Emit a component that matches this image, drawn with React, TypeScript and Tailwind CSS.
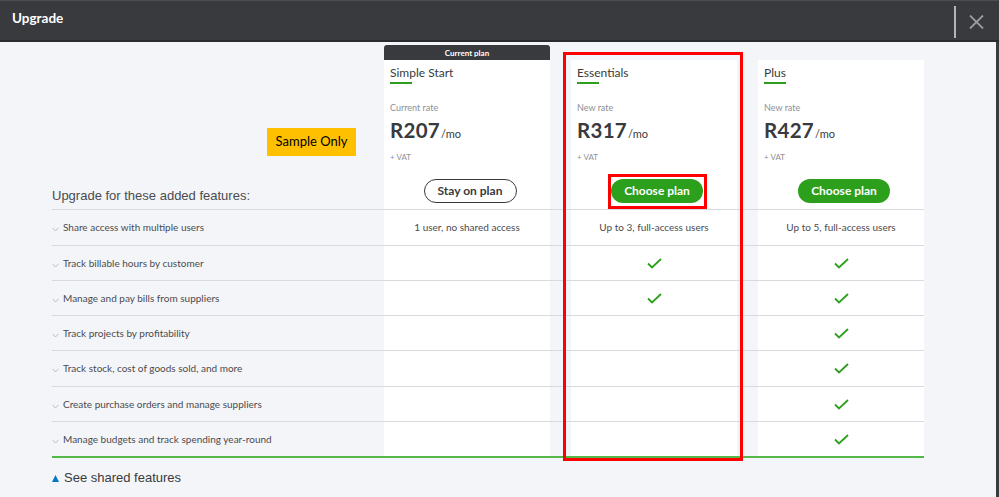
import React from "react";

const plans = [
  { name: "Simple Start", rateLabel: "Current rate", price: "R207", current: true },
  { name: "Essentials", rateLabel: "New rate", price: "R317", current: false },
  { name: "Plus", rateLabel: "New rate", price: "R427", current: false },
];

type Cell = string | boolean;

// row heights include the bottom border (border-box)
const features: { label: string; h: string; cells: Cell[] }[] = [
  { label: "Share access with multiple users", h: "h-[36px]", cells: ["1 user, no shared access", "Up to 3, full-access users", "Up to 5, full-access users"] },
  { label: "Track billable hours by customer", h: "h-[35px]", cells: [false, true, true] },
  { label: "Manage and pay bills from suppliers", h: "h-[35px]", cells: [false, true, true] },
  { label: "Track projects by profitability", h: "h-[35px]", cells: [false, false, true] },
  { label: "Track stock, cost of goods sold, and more", h: "h-[36px]", cells: [false, false, true] },
  { label: "Create purchase orders and manage suppliers", h: "h-[35px]", cells: [false, false, true] },
  { label: "Manage budgets and track spending year-round", h: "h-[36px]", cells: [false, false, true] },
];

function Check() {
  return (
    <svg width="15" height="11" viewBox="0 0 15 11" fill="none">
      <path d="M1 5.5 L5 9.5 L14 1" stroke="#2ca01c" strokeWidth="1.8" />
    </svg>
  );
}

function Chevron() {
  return (
    <svg width="7" height="5" viewBox="0 0 7 5" fill="none" className="mt-[4px]">
      <path d="M0.5 0.8 L3.5 4 L6.5 0.8" stroke="#b5b7bc" strokeWidth="0.9" />
    </svg>
  );
}

function PlanCard({ plan }: { plan: (typeof plans)[number] }) {
  return (
    <div className="w-[166px] flex flex-col pt-[3px]">
      {plan.current ? (
        <div className="h-[15px] bg-[#393a3d] rounded-t-[3px] flex items-center justify-center text-white text-[8px] font-bold leading-none">
          Current plan
        </div>
      ) : (
        <div className="h-[15px]" />
      )}
      <div className="flex-1 bg-white pl-[6px] flex flex-col">
        <div className="pt-[5px] text-[12px] leading-[16px] text-[#393a3d]">{plan.name}</div>
        <div className="mt-[1px] h-[2px] w-[22px] bg-[#2ca01c]" />
        <div className="mt-[18px] text-[9px] leading-[12px] text-[#8d9096]">{plan.rateLabel}</div>
        <div className="mt-[4px] h-[24px] flex items-baseline text-[#393a3d]">
          <span className="text-[20.5px] leading-[24px] font-bold tracking-[0.3px]">{plan.price}</span>
          <span className="text-[11px] ml-[1px]">/mo</span>
        </div>
        <div className="mt-[10px] text-[8px] leading-[10px] text-[#8d9096]">+ VAT</div>
        <div className="mt-[17px] flex justify-center">
          {plan.current ? (
            <button className="w-[93px] h-[24px] rounded-full border border-[#393a3d] bg-white text-[12px] font-bold text-[#393a3d]">
              Stay on plan
            </button>
          ) : (
            <button className="w-[92px] h-[24px] rounded-full bg-[#2ca01c] text-[12px] font-bold text-white">
              Choose plan
            </button>
          )}
        </div>
      </div>
    </div>
  );
}

export default function App() {
  return (
    <div className="w-[999px] h-[497px] overflow-hidden bg-[#f4f5f8] font-['Lato',sans-serif]">
      <div className="h-[42px] bg-[#393a3d] border-t border-t-[#4d4e52] border-b-2 border-b-[#2a2b2e] flex items-start">
        <div className="pl-[12px] pt-[9px] text-white text-[13.5px] font-bold leading-[16px]">Upgrade</div>
        <div className="ml-auto flex items-start">
          <div className="mt-[5px] w-[2px] h-[32px] bg-[#b4b5b8]" />
          <div className="ml-[13px] mt-[14px] mr-[15px]">
            <svg width="15" height="14" viewBox="0 0 15 14" fill="none">
              <path d="M1 0.5 L14 13.5 M14 0.5 L1 13.5" stroke="#9c9da1" strokeWidth="1.8" />
            </svg>
          </div>
        </div>
      </div>

      <div className="relative h-[455px] border-r-[3px] border-r-[#3a3b3e] pl-[52px]">
        <div className="flex h-[167px]">
          <div className="w-[332px] flex flex-col">
            <div className="mt-[86px] ml-[215px] w-[89px] h-[28px] bg-[#ffc000] flex items-center justify-center text-[13px] text-black">
              Sample Only
            </div>
            <div className="mt-auto mb-[5px] font-['Liberation_Sans',sans-serif] text-[13px] leading-[16px] text-[#4a4b4f]">
              Upgrade for these added features:
            </div>
          </div>
          <PlanCard plan={plans[0]} />
          <div className="w-[21px]" />
          <PlanCard plan={plans[1]} />
          <div className="w-[21px]" />
          <PlanCard plan={plans[2]} />
        </div>

        <div className="w-[872px] border-t border-[#d8dadf]">
          {features.map((f, i) => (
            <div
              key={f.label}
              className={
                "flex " +
                f.h +
                (i === features.length - 1 ? " border-b-2 border-[#53b848]" : " border-b border-[#d8dadf]")
              }
            >
              <div className="w-[332px] flex items-center gap-[4px] text-[10px] text-[#4a4b4f]">
                <Chevron />
                <span>{f.label}</span>
              </div>
              {f.cells.map((c, j) => (
                <React.Fragment key={j}>
                  {j > 0 && <div className="w-[21px]" />}
                  <div className="w-[166px] bg-white flex items-center justify-center text-[10px] text-[#4a4b4f]">
                    {typeof c === "string" ? c : c ? <Check /> : null}
                  </div>
                </React.Fragment>
              ))}
            </div>
          ))}
        </div>

        <div className="mt-[12px] flex items-center gap-[5px] font-['Liberation_Sans',sans-serif] text-[13px] leading-[16px] text-[#393a3d]">
          <svg width="7" height="7" viewBox="0 0 7 7">
            <path d="M3.5 0 L7 7 L0 7 Z" fill="#0077c5" />
          </svg>
          <span>See shared features</span>
        </div>

        <div className="absolute left-[563px] top-[10px] w-[180px] h-[409px] border-[3px] border-[#ff0000] pointer-events-none" />
        <div className="absolute left-[608px] top-[132px] w-[99px] h-[35px] border-[3px] border-[#ff0000] pointer-events-none" />
      </div>
    </div>
  );
}
